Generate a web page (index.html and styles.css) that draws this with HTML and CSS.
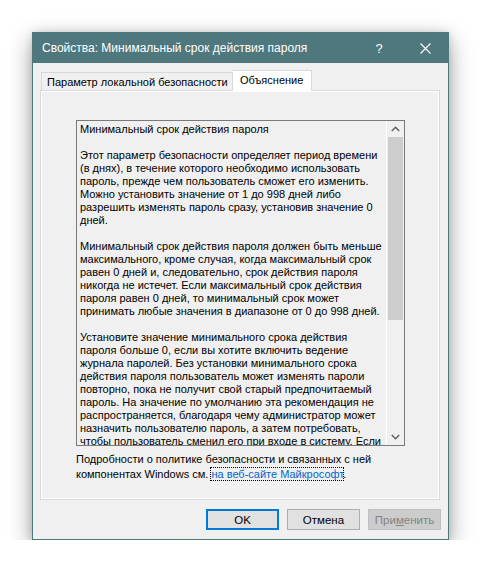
FILE: index.html
```html
<!DOCTYPE html>
<html lang="ru">
<head>
<meta charset="utf-8">
<title>Свойства</title>
<link rel="stylesheet" href="styles.css">
</head>
<body>
<div class="window">
  <div class="titlebar">
    <span class="title">Свойства: Минимальный срок действия пароля</span>
    <span class="tbtn help">?</span>
    <span class="tbtn close"><svg width="11" height="11" viewBox="0 0 11 11"><path d="M0.5 0.5 L10.5 10.5 M10.5 0.5 L0.5 10.5" stroke="#fff" stroke-width="1.1" fill="none"/></svg></span>
  </div>
  <div class="body">
    <div class="tabs">
      <div class="tab">Параметр локальной безопасности</div>
      <div class="tab active">Объяснение</div>
    </div>
    <div class="panel">
      <div class="textbox">
        <div class="text">Минимальный срок действия пароля<br>
<br>
Этот параметр безопасности определяет период времени<br>
(в днях), в течение которого необходимо использовать<br>
пароль, прежде чем пользователь сможет его изменить.<br>
Можно установить значение от 1 до 998 дней либо<br>
разрешить изменять пароль сразу, установив значение 0<br>
дней.<br>
<br>
Минимальный срок действия пароля должен быть меньше<br>
максимального, кроме случая, когда максимальный срок<br>
равен 0 дней и, следовательно, срок действия пароля<br>
никогда не истечет. Если максимальный срок действия<br>
пароля равен 0 дней, то минимальный срок может<br>
принимать любые значения в диапазоне от 0 до 998 дней.<br>
<br>
Установите значение минимального срока действия<br>
пароля больше 0, если вы хотите включить ведение<br>
журнала паролей. Без установки минимального срока<br>
действия пароля пользователь может изменять пароли<br>
повторно, пока не получит свой старый предпочитаемый<br>
пароль. На значение по умолчанию эта рекомендация не<br>
распространяется, благодаря чему администратор может<br>
назначить пользователю пароль, а затем потребовать,<br>
чтобы пользователь сменил его при входе в систему. Если</div>
        <div class="scrollbar">
          <div class="sbtn"><svg width="9" height="6" viewBox="0 0 9 6"><path d="M0.8 5 L4.5 1.3 L8.2 5" stroke="#606060" stroke-width="1.5" fill="none"/></svg></div>
          <div class="track"><div class="thumb"></div></div>
          <div class="sbtn"><svg width="9" height="6" viewBox="0 0 9 6"><path d="M0.8 1 L4.5 4.7 L8.2 1" stroke="#606060" stroke-width="1.5" fill="none"/></svg></div>
        </div>
      </div>
      <p class="more">Подробности о политике безопасности и связанных с ней<br>компонентах Windows см. <a class="link" href="#">на веб-сайте Майкрософт</a>.</p>
    </div>
    <div class="buttons">
      <button class="btn default">OK</button>
      <button class="btn">Отмена</button>
      <button class="btn disabled">При<u>м</u>енить</button>
    </div>
  </div>
</div>
</body>
</html>
```

FILE: styles.css
```css
html, body {
  margin: 0;
  background: #ffffff;
}
body {
  padding: 32px 0 0 32px;
  font-family: "Liberation Sans", Arial, sans-serif;
  font-size: 12px;
  color: #000;
}
.window {
  box-sizing: border-box;
  width: 417px;
  height: 508px;
  border: 1px solid #4f787e;
  background: #f0f0f0;
  box-shadow: 0 8px 22px rgba(0, 0, 0, 0.38), 0 0 8px rgba(0, 0, 0, 0.12);
  display: flex;
  flex-direction: column;
}
.titlebar {
  height: 30px;
  background: #4f787e;
  color: #fff;
  display: flex;
  align-items: center;
  flex: none;
}
.title {
  flex: 1;
  padding-left: 9px;
  font-size: 12px;
  white-space: nowrap;
}
.tbtn {
  width: 46px;
  height: 30px;
  display: flex;
  align-items: center;
  justify-content: center;
}
.help {
  font-size: 13px;
}
.body {
  flex: 1;
  display: flex;
  flex-direction: column;
}
.tabs {
  display: flex;
  align-items: flex-end;
  margin: 7px 0 0 8px;
  height: 20px;
  position: relative;
  z-index: 1;
}
.tab {
  box-sizing: border-box;
  height: 18px;
  border: 1px solid #d9d9d9;
  border-bottom: none;
  background: #f0f0f0;
  padding: 2px 0 0 5px;
  width: 192px;
  font-size: 11px;
  line-height: 14px;
  white-space: nowrap;
}
.tab.active {
  height: 21px;
  margin-bottom: -1px;
  width: 79px;
  background: #fff;
  padding: 2px 0 0 7px;
  border-left: none;
}
.panel {
  box-sizing: border-box;
  height: 410px;
  margin: 0 8px 0 7px;
  border: 1px solid #d9d9d9;
  box-shadow: inset 0 0 0 1px #fff;
  padding: 29px 0 0 35px;
}
.textbox {
  box-sizing: border-box;
  width: 329px;
  height: 326px;
  border: 1px solid #7a7a7a;
  background: #f0f0f0;
  display: flex;
  overflow: hidden;
}
.text {
  flex: 1;
  padding: 2px 0 0 3px;
  font-size: 11px;
  line-height: 13px;
  white-space: nowrap;
  overflow: hidden;
}
.scrollbar {
  width: 17px;
  border-left: 1px solid #fff;
  display: flex;
  flex-direction: column;
  flex: none;
}
.sbtn {
  height: 16px;
  display: flex;
  align-items: center;
  justify-content: center;
  flex: none;
}
.track {
  flex: 1;
  padding: 0 1px;
}
.thumb {
  height: 183px;
  background: #cdcdcd;
}
.more {
  margin: 6px 0 0 0;
  font-size: 11px;
  line-height: 15px;
  white-space: nowrap;
}
.link {
  color: #0066cc;
  text-decoration: none;
  outline: 1px dotted #000;
}
.buttons {
  display: flex;
  justify-content: flex-end;
  gap: 8px;
  margin: 9px 7px 0 0;
}
.btn {
  box-sizing: border-box;
  width: 73px;
  height: 21px;
  border: 1px solid #adadad;
  background: #e1e1e1;
  font-family: "Liberation Sans", Arial, sans-serif;
  font-size: 11.5px;
  color: #000;
  padding: 0;
}
.btn.default {
  border: 2px solid #0078d7;
}
.btn.disabled {
  background: #cccccc;
  border-color: #bfbfbf;
  color: #838383;
}
```
